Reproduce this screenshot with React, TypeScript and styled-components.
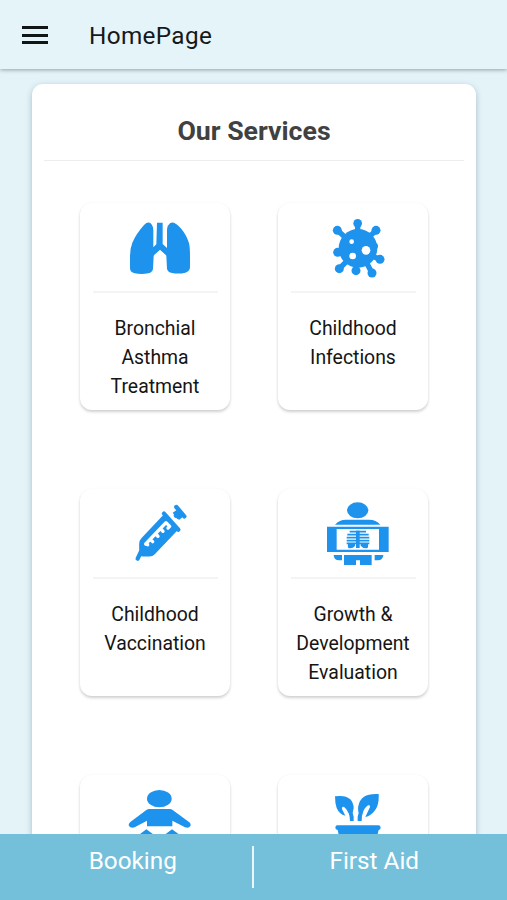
import React from 'react';
import styled, { createGlobalStyle } from 'styled-components';

const GlobalStyle = createGlobalStyle`
  * { box-sizing: border-box; }
  body { margin: 0; font-family: Roboto, sans-serif; background: #e4f3f8; }
`;

const Screen = styled.div`
  height: 900px;
  display: flex;
  flex-direction: column;
  overflow: hidden;
  background: #e4f3f8;
`;

const TopBar = styled.header`
  flex: 0 0 69px;
  display: flex;
  align-items: center;
  gap: 41px;
  padding: 2px 22px 0;
  background: #e5f4f8;
  box-shadow: 0 1px 4px rgba(40, 65, 75, 0.45);
  z-index: 1;
`;

const MenuButton = styled.button`
  display: flex;
  flex-direction: column;
  gap: 4.5px;
  width: 26px;
  padding: 0 0 1px;
  border: 0;
  background: none;
`;

const MenuLine = styled.span`
  height: 3px;
  background: #101516;
`;

const PageTitle = styled.h1`
  margin: 0;
  font-size: 24.3px;
  font-weight: 400;
  line-height: 30px;
  letter-spacing: 0.35px;
  color: #14191b;
`;

const Content = styled.main`
  flex: 1;
  min-height: 0;
  overflow: hidden;
  padding: 15px 31px 0 32px;
`;

const Panel = styled.section`
  height: 1000px;
  padding: 0 12px;
  background: #fff;
  border-radius: 11px;
  box-shadow: 0 2px 6px rgba(40, 85, 110, 0.32);
`;

const PanelTitle = styled.h2`
  height: 77px;
  margin: 0;
  padding-top: 31px;
  border-bottom: 1px solid #ededed;
  font-size: 26.7px;
  font-weight: 700;
  line-height: 32px;
  text-align: center;
  color: #414141;
`;

const Grid = styled.div`
  display: grid;
  grid-template-columns: 150px 150px;
  grid-auto-rows: 207px;
  gap: 79px 48px;
  padding: 42px 36px 0;
`;

const Card = styled.article`
  padding: 13px 12px 0 13px;
  border-radius: 12px;
  background: #fff;
  box-shadow: 0 2px 3px rgba(0, 0, 0, 0.18), 0 0 3px rgba(0, 0, 0, 0.03);
`;

const IconSlot = styled.div`
  height: 77px;
  padding-left: 34px;
  border-bottom: 2px solid #f4f4f4;
`;

const Icon = styled.svg`
  display: block;
  width: 66px;
  height: 66px;
  fill: #1e93ee;
`;

const Label = styled.p`
  margin: 20.8px -9.5px 0 -10.5px;
  font-size: 19.4px;
  line-height: 29.3px;
  text-align: center;
  white-space: pre-line;
  color: #151515;
`;

const BottomBar = styled.nav`
  flex: 0 0 66px;
  display: grid;
  grid-template-columns: 1fr 2px 1fr;
  background: #74c0db;
  z-index: 1;
`;

const Tab = styled.button<{ $side: 'left' | 'right' }>`
  padding: ${(p) => (p.$side === 'left' ? '0 0 0 13px' : '0 13px 0 0')};
  height: 54px;
  border: 0;
  background: none;
  font: 400 24.3px/30px Roboto, sans-serif;
  color: #fff;
`;

const TabDivider = styled.span`
  width: 1.5px;
  height: 42px;
  margin: 12px 0 0 -0.5px;
  background: rgba(255, 255, 255, 0.85);
`;

const Lungs = () => (
  <Icon viewBox="171 78 198 198">
    <path d="M261 98h17v64l13 12V118q0-11 9-18q7-5 17 1c17 10 34 37 40 58q3 12 3 40v33q0 12-14 16q-20 5-40 1q-12-2-15-12l-2-40-19-17-19 17-2 40q-2 10-14 13q-21 4-41 0q-14-3-14-16v-33q0-26 7-43q11-26 35-53q13-13 22-3q6 8 6 18v52l9-9z" />
    <path d="M270 180l-17 15 1 55h32l1-55z" fill="#fff" />
  </Icon>
);

const Virus = () => (
  <Icon viewBox="165 78 198 198">
    <path
      d="M263 100v30M202 121l26 23M318 121l-25 24M202 187h30M330 208l-30-12M208 236l24-24M258 242v-28M306 249l-19-36M314 168h-15"
      fill="none" stroke="#1e93ee" strokeWidth="16" strokeLinecap="round"
    />
    <circle cx="264" cy="175" r="58" />
    <circle cx="263" cy="100" r="13" />
    <circle cx="202" cy="121" r="13.5" />
    <circle cx="318" cy="121" r="13.5" />
    <circle cx="203" cy="187" r="13.5" />
    <circle cx="330" cy="208" r="13.5" />
    <circle cx="208" cy="236" r="13.5" />
    <circle cx="258" cy="242" r="13.5" />
    <circle cx="306" cy="249" r="13.5" />
    <circle cx="315" cy="168" r="9" />
    <g fill="#fff">
      <circle cx="245" cy="155" r="7" />
      <circle cx="288" cy="181" r="13" />
      <circle cx="248" cy="198" r="10" />
    </g>
  </Icon>
);

const Syringe = () => (
  <Icon viewBox="171 66 198 198">
    <path
      d="M282 101l43 48M281 113l-63 67q-4 4-4 12v21l-11 23M315 149l-64 68q-5 6-13 6h-20"
      fill="none" stroke="#1e93ee" strokeWidth="13" strokeLinecap="round" strokeLinejoin="round"
    />
    <path d="M282 108l40 42-73 75h-36l-2-37z" />
    <path
      d="M227 192L288 128l11 11-5 5M272 146l7 8M257 161l7 8M241 178l7 7M227 192l6 2"
      fill="none" stroke="#fff" strokeWidth="10" strokeLinecap="round" strokeLinejoin="round"
    />
    <path d="M319 81l24 28M330 96l-12 11" fill="none" stroke="#1e93ee" strokeWidth="13" strokeLinecap="round" />
    <path d="M308 98l12-8 19 20-11 9-7-3z" />
  </Icon>
);

const XRay = () => (
  <Icon viewBox="165 66 198 198">
    <ellipse cx="263" cy="91" rx="32" ry="24" />
    <path d="M195 134q13-15 33-15h70q20 0 33 15zM171 140h185v76H171zM191 225h25v16h-8q-17 0-17-16zM314 225h26q-1 16-17 16h-9zM222 225h83v30h-35v-14h-12v14h-36z" />
    <path d="M200 147h127v62H200z" fill="#fff" />
    <path d="M258 152h11v52h-11z" />
    <path d="M239 155h49M232 164h64M230 173h68M230 182h68M230 190h68" fill="none" stroke="#1e93ee" strokeWidth="5" />
    <path d="M234 192h21v6q-6 8-17 7-6 0-4-13zM272 192h22q2 14-5 13-11 0-17-8z" />
  </Icon>
);

const Baby = () => (
  <Icon viewBox="171 66 198 198">
    <ellipse cx="268" cy="98" rx="37" ry="26" />
    <path d="M239 129h60q5 0 10 4l49 36q6 5 3 11-4 8-16 4l-38-20v17h-76v-17l-37 20q-12 3-17-4-3-6 4-12l47-35q5-4 11-4zM229 190l28 20-38 40q-9 8-20 0-8-9 0-20l3-20zM306 190l28 20 3 20q8 11 0 20-11 8-20 0l-38-40z" />
  </Icon>
);

const Plant = () => (
  <Icon viewBox="165 66 198 198">
    <path d="M195 91q31-5 46 9 10 11 10 27l-3 14 3 11v13h-11q0-25-15-40-6-5-9 0-1 3 1 6l9 18q-18-4-26-23-5-14-5-35zM326 84q2 33-12 50-11 15-28 19l14-30q1-7-6-5-19 13-19 47h-12v-13l3-11q-3-11-1-21 3-18 17-28 15-10 44-8zM202 178h123q7 0 7 7 0 6-6 7l-15 60h-95l-13-60q-7-1-7-7 0-7 6-7z" />
  </Icon>
);

const services = [
  { label: 'Bronchial\nAsthma\nTreatment', Art: Lungs },
  { label: 'Childhood\nInfections', Art: Virus },
  { label: 'Childhood\nVaccination', Art: Syringe },
  { label: 'Growth &\nDevelopment\nEvaluation', Art: XRay },
  { label: '', Art: Baby },
  { label: '', Art: Plant },
];

export default function App() {
  return (
    <Screen>
      <GlobalStyle />
      <TopBar>
        <MenuButton aria-label="Menu">
          <MenuLine />
          <MenuLine />
          <MenuLine />
        </MenuButton>
        <PageTitle>HomePage</PageTitle>
      </TopBar>
      <Content>
        <Panel>
          <PanelTitle>Our Services</PanelTitle>
          <Grid>
            {services.map(({ label, Art }, i) => (
              <Card key={i}>
                <IconSlot>
                  <Art />
                </IconSlot>
                <Label>{label}</Label>
              </Card>
            ))}
          </Grid>
        </Panel>
      </Content>
      <BottomBar>
        <Tab $side="left">Booking</Tab>
        <TabDivider />
        <Tab $side="right">First Aid</Tab>
      </BottomBar>
    </Screen>
  );
}
